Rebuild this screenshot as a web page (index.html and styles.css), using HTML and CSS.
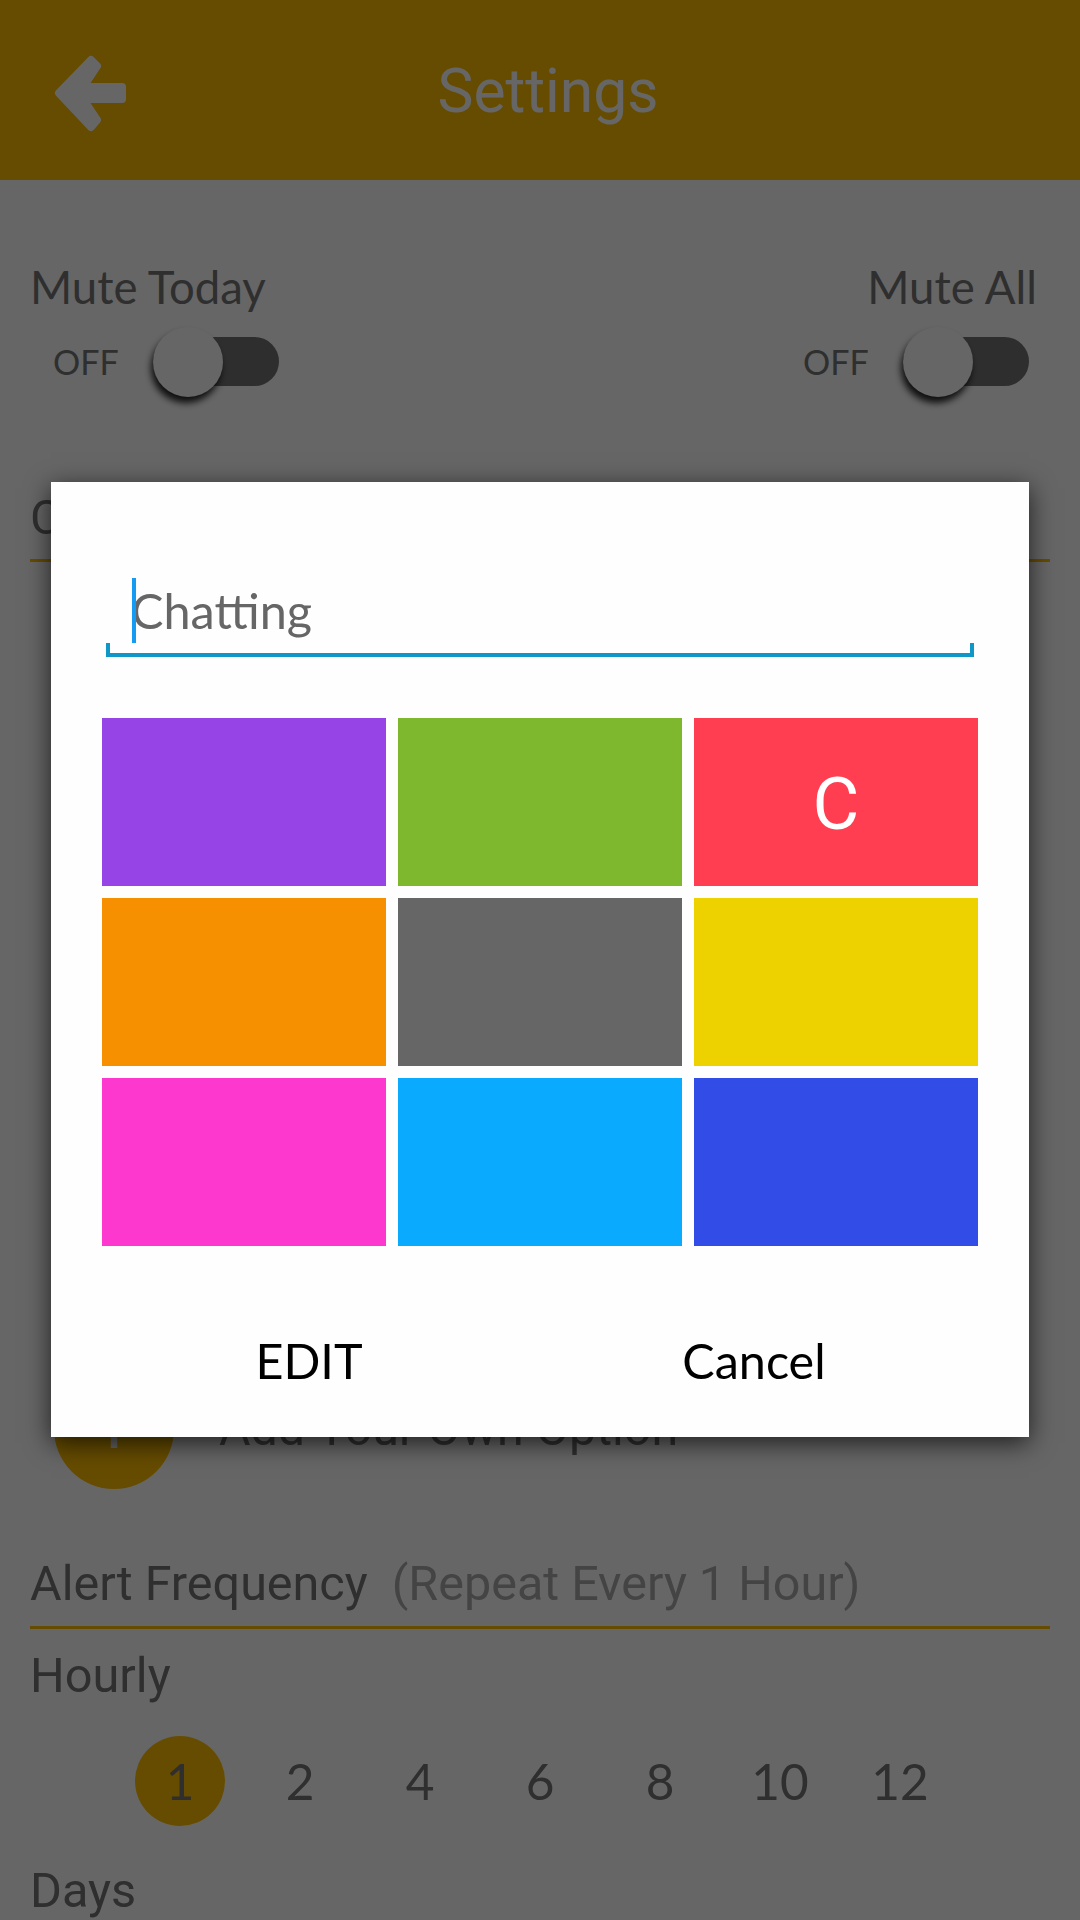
FILE: index.html
```html
<!DOCTYPE html>
<html lang="en">
<head>
    <meta charset="UTF-8">
    <meta name="viewport" content="width=device-width, initial-scale=1.0">
    <title>Settings</title>
    <link rel="stylesheet" href="styles.css">
</head>
<body>
    <div class="page">
        <div class="header">
            <svg class="back-icon" viewBox="0 0 72 78">
                <polygon points="5,38 37,5 43,11 29,32 68,32 68,44 29,44 43,65 37,72"></polygon>
            </svg>
            <div class="header-title">Settings</div>
        </div>

        <div class="mute-row">
            <div class="mute-group">
                <div class="mute-label">Mute Today</div>
                <div class="switch-row">
                    <span class="switch-text">OFF</span>
                    <div class="switch"><div class="switch-knob"></div></div>
                </div>
            </div>
            <div class="mute-group mute-group-right">
                <div class="mute-label">Mute All</div>
                <div class="switch-row">
                    <span class="switch-text">OFF</span>
                    <div class="switch"><div class="switch-knob"></div></div>
                </div>
            </div>
        </div>

        <div class="section-title options-title">Choose Option</div>
        <div class="options-list"></div>

        <div class="add-row">
            <div class="add-button">+</div>
            <div class="add-text">Add Your Own Option</div>
        </div>

        <div class="section-title frequency-title">Alert Frequency <span class="section-note">(Repeat Every 1 Hour)</span></div>
        <div class="sub-title hourly-title">Hourly</div>
        <div class="number-row">
            <div class="number number-active">1</div>
            <div class="number">2</div>
            <div class="number">4</div>
            <div class="number">6</div>
            <div class="number">8</div>
            <div class="number">10</div>
            <div class="number">12</div>
        </div>
        <div class="sub-title days-title">Days</div>
    </div>

    <div class="overlay"></div>

    <div class="dialog">
        <div class="name-field">
            <span class="caret"></span>
            <span class="name-text">Chatting</span>
        </div>
        <div class="name-line"></div>
        <div class="tiles">
            <div class="tile tile-purple"></div>
            <div class="tile tile-green"></div>
            <div class="tile tile-red">C</div>
            <div class="tile tile-orange"></div>
            <div class="tile tile-grey"></div>
            <div class="tile tile-yellow"></div>
            <div class="tile tile-pink"></div>
            <div class="tile tile-blue"></div>
            <div class="tile tile-indigo"></div>
        </div>
        <div class="dialog-buttons">
            <div class="dialog-button">EDIT</div>
            <div class="dialog-button">Cancel</div>
        </div>
    </div>
</body>
</html>
```

FILE: styles.css
```css
html, body {
    margin: 0;
    padding: 0;
}
body {
    position: relative;
    width: 1080px;
    height: 1920px;
    overflow: hidden;
    background-color: #fff;
    font-family: Lato, sans-serif;
}
.page {
    height: 1920px;
    color: #757575;
}
.header {
    position: relative;
    height: 180px;
    display: flex;
    align-items: center;
    justify-content: center;
    background-color: #ffbf00;
}
.back-icon {
    position: absolute;
    left: 54px;
    top: 55px;
    width: 72px;
    height: 78px;
    fill: #fff;
    stroke: #fff;
    stroke-width: 8;
    stroke-linejoin: round;
}
.header-title {
    font-family: Roboto, sans-serif;
    font-size: 60.5px;
    line-height: 72px;
    color: #fff;
    margin: 4px 0 0 16px;
}
.mute-row {
    display: flex;
    justify-content: space-between;
    padding: 81px 43px 0 30px;
}
.mute-label {
    font-size: 45.5px;
    line-height: 52px;
}
.mute-group-right {
    text-align: right;
}
.switch-row {
    display: flex;
    align-items: center;
    margin-top: 14px;
    padding-left: 23px;
}
.mute-group-right .switch-row {
    padding-left: 0;
    margin-right: 8px;
}
.switch-text {
    font-size: 34px;
    width: 100px;
    text-align: left;
}
.switch {
    position: relative;
    width: 126px;
    height: 49px;
    margin: 10px 0;
    background-color: #747474;
    border-radius: 25px;
}
.switch-knob {
    position: absolute;
    left: 0;
    top: -10px;
    width: 70px;
    height: 70px;
    background-color: #fff;
    border-radius: 50%;
    box-shadow: -2px 6px 7px rgba(0, 0, 0, 0.85);
}
.section-title {
    font-family: Roboto, sans-serif;
    font-size: 48.5px;
    line-height: 54px;
    margin: 0 30px;
    border-bottom: 3px solid #ffbf00;
}
.options-title {
    margin-top: 95px;
    padding-bottom: 14px;
}
.options-list {
    height: 807px;
}
.add-row {
    display: flex;
    align-items: center;
    padding-left: 54px;
    gap: 45px;
}
.add-button {
    width: 120px;
    height: 120px;
    display: flex;
    align-items: center;
    justify-content: center;
    border-radius: 50%;
    background-color: #ffbf00;
    color: #fff;
    font-family: Roboto, sans-serif;
    font-size: 70px;
}
.add-text {
    font-family: Roboto, sans-serif;
    font-size: 48.4px;
    line-height: 54px;
}
.frequency-title {
    margin-top: 68px;
    padding-bottom: 15px;
}
.section-note {
    color: #aaa;
    margin-left: 12px;
}
.sub-title {
    font-family: Roboto, sans-serif;
    font-size: 48.7px;
    line-height: 54px;
    padding-left: 30px;
}
.hourly-title {
    margin-top: 20px;
}
.number-row {
    display: grid;
    grid-template-columns: repeat(7, 90px);
    gap: 30px;
    margin-top: 33px;
    padding-left: 135px;
}
.number {
    height: 90px;
    display: flex;
    align-items: center;
    justify-content: center;
    font-size: 49.5px;
    border-radius: 50%;
}
.number-active {
    background-color: #ffbf00;
}
.days-title {
    margin-top: 38px;
}
.overlay {
    position: absolute;
    left: 0;
    top: 0;
    width: 1080px;
    height: 1920px;
    background-color: rgba(0, 0, 0, 0.6);
}
.dialog {
    position: absolute;
    left: 51px;
    top: 482px;
    width: 978px;
    height: 955px;
    background-color: #fefefe;
    box-shadow: 0 6px 24px rgba(0, 0, 0, 0.7);
}
.name-field {
    position: relative;
    height: 65px;
    margin: 96px 55px 0;
    padding-left: 25px;
    display: flex;
    align-items: center;
}
.caret {
    position: absolute;
    left: 26px;
    top: 0;
    width: 4px;
    height: 65px;
    background-color: #159cf2;
}
.name-text {
    font-size: 48.6px;
    line-height: 67px;
    color: #666;
}
.name-line {
    height: 10px;
    margin: 0 55px;
    border: 4px solid #0f97c8;
    border-top: 0;
}
.tiles {
    display: grid;
    grid-template-columns: repeat(3, 284px);
    grid-auto-rows: 168px;
    gap: 12px;
    margin: 61px 0 0 51px;
}
.tile {
    display: flex;
    align-items: center;
    justify-content: center;
    color: #fff;
    font-family: Roboto, sans-serif;
    font-size: 72px;
    padding-top: 4px;
}
.tile-purple { background-color: #9744e6; }
.tile-green { background-color: #7eb82f; }
.tile-red { background-color: #ff3e51; }
.tile-orange { background-color: #f79000; }
.tile-grey { background-color: #666; }
.tile-yellow { background-color: #eed200; }
.tile-pink { background-color: #fd38ce; }
.tile-blue { background-color: #0aabff; }
.tile-indigo { background-color: #324ce8; }
.dialog-buttons {
    display: grid;
    grid-template-columns: 444px 446px;
    margin: 78px 0 0 36px;
}
.dialog-button {
    text-align: center;
    font-size: 48.5px;
    line-height: 72px;
    color: #000;
}
```
